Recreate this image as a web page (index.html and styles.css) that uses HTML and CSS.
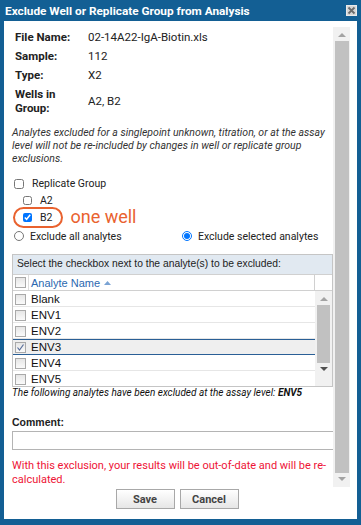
FILE: index.html
```html
<!DOCTYPE html>
<html lang="en">
<head>
    <meta charset="UTF-8">
    <meta name="viewport" content="width=device-width, initial-scale=1.0">
    <title>Exclude Well or Replicate Group from Analysis</title>
    <link rel="stylesheet" href="styles.css">
</head>
<body>

    <div class="window">
        <div class="titlebar">
            <span class="title">Exclude Well or Replicate Group from Analysis</span>
            <span class="close-btn">
                <svg width="9" height="9" viewBox="0 0 9 9"><path d="M1.5 1.5 L7.5 7.5 M7.5 1.5 L1.5 7.5" stroke="#6b6b6b" stroke-width="1.8"/></svg>
            </span>
        </div>

        <div class="window-body">
            <div class="scroll-area">
                <div class="content">
                    <div class="details">
                        <div class="label">File Name:</div>
                        <div class="value">02-14A22-IgA-Biotin.xls</div>
                        <div class="label">Sample:</div>
                        <div class="value">112</div>
                        <div class="label">Type:</div>
                        <div class="value">X2</div>
                        <div class="label">Wells in Group:</div>
                        <div class="value">A2, B2</div>
                    </div>

                    <p class="note">Analytes excluded for a singlepoint unknown, titration, or at the assay level will not be re-included by changes in well or replicate group exclusions.</p>

                    <div class="check-row group">
                        <input type="checkbox" class="cb">
                        <span>Replicate Group</span>
                    </div>
                    <div class="check-row well">
                        <input type="checkbox" class="cb small">
                        <span>A2</span>
                    </div>
                    <div class="check-row well">
                        <span class="callout-ring"></span>
                        <input type="checkbox" class="cb small" checked>
                        <span>B2</span>
                        <span class="callout-text">one well</span>
                    </div>

                    <div class="radio-row">
                        <label class="radio"><input type="radio" name="mode"> Exclude all analytes</label>
                        <label class="radio"><input type="radio" name="mode" checked> Exclude selected analytes</label>
                    </div>

                    <div class="grid-panel">
                        <div class="grid-title">Select the checkbox next to the analyte(s) to be excluded:</div>
                        <div class="grid-head">
                            <div class="cell-check"><span class="x-check"></span></div>
                            <div class="head-name">Analyte Name
                                <svg width="7" height="4" viewBox="0 0 7 4"><path d="M0 4 L3.5 0 L7 4 Z" fill="#7aa3d4"/></svg>
                            </div>
                            <div class="head-spacer"></div>
                        </div>
                        <div class="grid-body">
                            <div class="rows">
                                <div class="row"><div class="cell-check"><span class="x-check"></span></div><div class="cell-name">Blank</div></div>
                                <div class="row"><div class="cell-check"><span class="x-check"></span></div><div class="cell-name">ENV1</div></div>
                                <div class="row"><div class="cell-check"><span class="x-check"></span></div><div class="cell-name">ENV2</div></div>
                                <div class="row selected"><div class="cell-check"><span class="x-check on">
                                    <svg width="9" height="9" viewBox="0 0 9 9"><path d="M1.5 4.5 L3.5 7 L7.5 1.5" stroke="#5a6f9a" stroke-width="1.2" fill="none"/></svg>
                                </span></div><div class="cell-name">ENV3</div></div>
                                <div class="row"><div class="cell-check"><span class="x-check"></span></div><div class="cell-name">ENV4</div></div>
                                <div class="row"><div class="cell-check"><span class="x-check"></span></div><div class="cell-name">ENV5</div></div>
                            </div>
                            <div class="inner-scroll">
                                <span class="arrow up"></span>
                                <span class="thumb"></span>
                                <span class="arrow down"></span>
                            </div>
                        </div>
                    </div>

                    <div class="assay-note">The following analytes have been excluded at the assay level: <b>ENV5</b></div>

                    <div class="comment-label">Comment:</div>
                    <input type="text" class="comment-input">

                    <p class="warning">With this exclusion, your results will be out-of-date and will be re-calculated.</p>
                </div>

                <div class="main-scroll">
                    <span class="arrow up"></span>
                    <span class="thumb"></span>
                    <span class="arrow down"></span>
                </div>
            </div>

            <div class="footer">
                <button class="btn">Save</button>
                <button class="btn">Cancel</button>
            </div>
        </div>
    </div>

</body>
</html>
```

FILE: styles.css
```css
html, body {
    margin: 0;
    padding: 0;
    height: 100%;
}
body {
    font-family: Roboto, Arial, sans-serif;
    font-size: 11.5px;
    color: #222;
}
.window {
    height: 525px;
    background-color: #135f94;
    display: flex;
    flex-direction: column;
    padding: 0 4px 6px 4px;
    box-sizing: border-box;
}
.titlebar {
    height: 21px;
    display: flex;
    align-items: center;
    justify-content: space-between;
    padding-left: 1px;
}
.title {
    color: #fff;
    font-weight: bold;
    font-size: 11.8px;
}
.close-btn {
    width: 11px;
    height: 11px;
    margin-top: -1px;
    background-color: #d6d6d6;
    border: 1px solid #eaeaea;
    box-sizing: border-box;
    display: flex;
    align-items: center;
    justify-content: center;
}
.window-body {
    flex: 1;
    background-color: #fff;
    display: flex;
    flex-direction: column;
    padding: 6px 7px 0 0;
    min-height: 0;
}
.scroll-area {
    display: flex;
    height: 460px;
}
.content {
    flex: 1;
    overflow: hidden;
    padding: 3px 0 0 8px;
}

/* file details */
.details {
    display: grid;
    grid-template-columns: 73px 1fr;
    row-gap: 5px;
    align-items: center;
    line-height: 14px;
    padding-left: 3px;
}
.details .label {
    font-weight: bold;
    width: 60px;
}
.note {
    margin: 11px 0 0 0;
    font-style: italic;
    font-size: 10.5px;
    line-height: 13px;
    color: #333;
}

/* checkboxes */
.check-row {
    position: relative;
    display: flex;
    align-items: center;
    height: 17px;
    padding-left: 2px;
    gap: 8px;
    font-size: 10.5px;
}
.check-row.group {
    margin-top: 10px;
}
.check-row.well {
    padding-left: 11px;
}
.cb {
    width: 10px;
    height: 10px;
    margin: 0;
}
.cb.small {
    width: 9px;
    height: 9px;
}
.callout-ring {
    position: absolute;
    left: 1px;
    top: -2px;
    width: 50px;
    height: 21px;
    border: 2px solid #e9622f;
    border-radius: 11px;
    box-sizing: border-box;
}
.callout-text {
    color: #e9622f;
    font-size: 18px;
    margin-left: 10px;
    margin-top: -2px;
}
.radio-row {
    display: grid;
    grid-template-columns: 168px 1fr;
    height: 18px;
    align-items: center;
    padding-left: 2px;
    margin-top: 1px;
    font-size: 10.5px;
}
.radio {
    display: flex;
    align-items: center;
    gap: 6px;
}
.radio input {
    width: 10px;
    height: 10px;
    margin: 0;
}

/* analyte grid */
.grid-panel {
    margin-top: 9px;
    border: 1px solid #c5c5c5;
    font-family: "Liberation Sans", Arial, sans-serif;
    font-size: 10.3px;
}
.grid-title {
    height: 19px;
    line-height: 18px;
    background-color: #e1e9f1;
    padding-left: 4px;
    color: #222;
}
.grid-head {
    display: flex;
    height: 15px;
    border-top: 1px solid #d0d0d0;
    border-bottom: 1px solid #d0d0d0;
}
.cell-check {
    width: 15px;
    display: flex;
    align-items: center;
    justify-content: center;
    border-right: 1px solid #dcdcdc;
}
.head-name {
    flex: 1;
    color: #2b68b0;
    font-size: 11px;
    display: flex;
    align-items: center;
    gap: 4px;
    padding-left: 2px;
}
.head-spacer {
    width: 17px;
    border-left: 1px solid #d0d0d0;
}
.x-check {
    width: 11px;
    height: 11px;
    box-sizing: border-box;
    border: 1px solid #a9a9a9;
    background: linear-gradient(#e6e6e6, #fafafa);
    display: flex;
    align-items: center;
    justify-content: center;
}
.grid-body {
    display: flex;
    height: 95px;
    overflow: hidden;
}
.rows {
    flex: 1;
}
.row {
    display: flex;
    height: 14px;
    border-bottom: 1px solid #e6e6e6;
    border-top: 1px solid transparent;
}
.row .cell-check {
    border-right: none;
}
.row.selected {
    background-color: #efefef;
    border-top-color: #2a5f96;
    border-bottom-color: #2a5f96;
}
.cell-name {
    font-size: 11.5px;
    line-height: 15px;
    padding-left: 3px;
    color: #111;
}
.inner-scroll,
.main-scroll {
    width: 17px;
    background-color: #f1f1f1;
    display: flex;
    flex-direction: column;
    align-items: center;
}
.inner-scroll .thumb {
    width: 13px;
    height: 58px;
    background-color: #c1c1c1;
}
.main-scroll .thumb {
    width: 14px;
    flex: 1;
    background-color: #c1c1c1;
}
.arrow {
    width: 0;
    height: 0;
    border-left: 4px solid transparent;
    border-right: 4px solid transparent;
}
.arrow.up {
    border-bottom: 4px solid #a3a3a3;
    margin: 6px 0 4px;
}
.arrow.down {
    border-top: 4px solid #505050;
    margin: 4px 0 6px;
}
.main-scroll .arrow.down {
    border-top-color: #a3a3a3;
}
.assay-note {
    font-style: italic;
    font-size: 10px;
    line-height: 12px;
    color: #111;
}
.comment-label {
    font-family: "Liberation Sans", Arial, sans-serif;
    font-weight: bold;
    font-size: 10.5px;
    line-height: 14px;
    margin-top: 16px;
}
.comment-input {
    display: block;
    width: 340px;
    height: 19px;
    margin: 2px 0 0 0;
    border: 1px solid #b4b4b4;
    box-sizing: border-box;
    outline: none;
}
.warning {
    margin: 9px 0 0 0;
    color: #ee1436;
    font-size: 11px;
    line-height: 14px;
}

/* footer buttons */
.footer {
    display: flex;
    justify-content: center;
    gap: 5px;
    padding-top: 2px;
}
.btn {
    width: 59px;
    height: 20px;
    border: 1px solid #a8a8a8;
    background: linear-gradient(#ffffff, #e6e6e6);
    font-family: Roboto, Arial, sans-serif;
    font-weight: bold;
    font-size: 11px;
    color: #444;
    padding: 0;
}
```
